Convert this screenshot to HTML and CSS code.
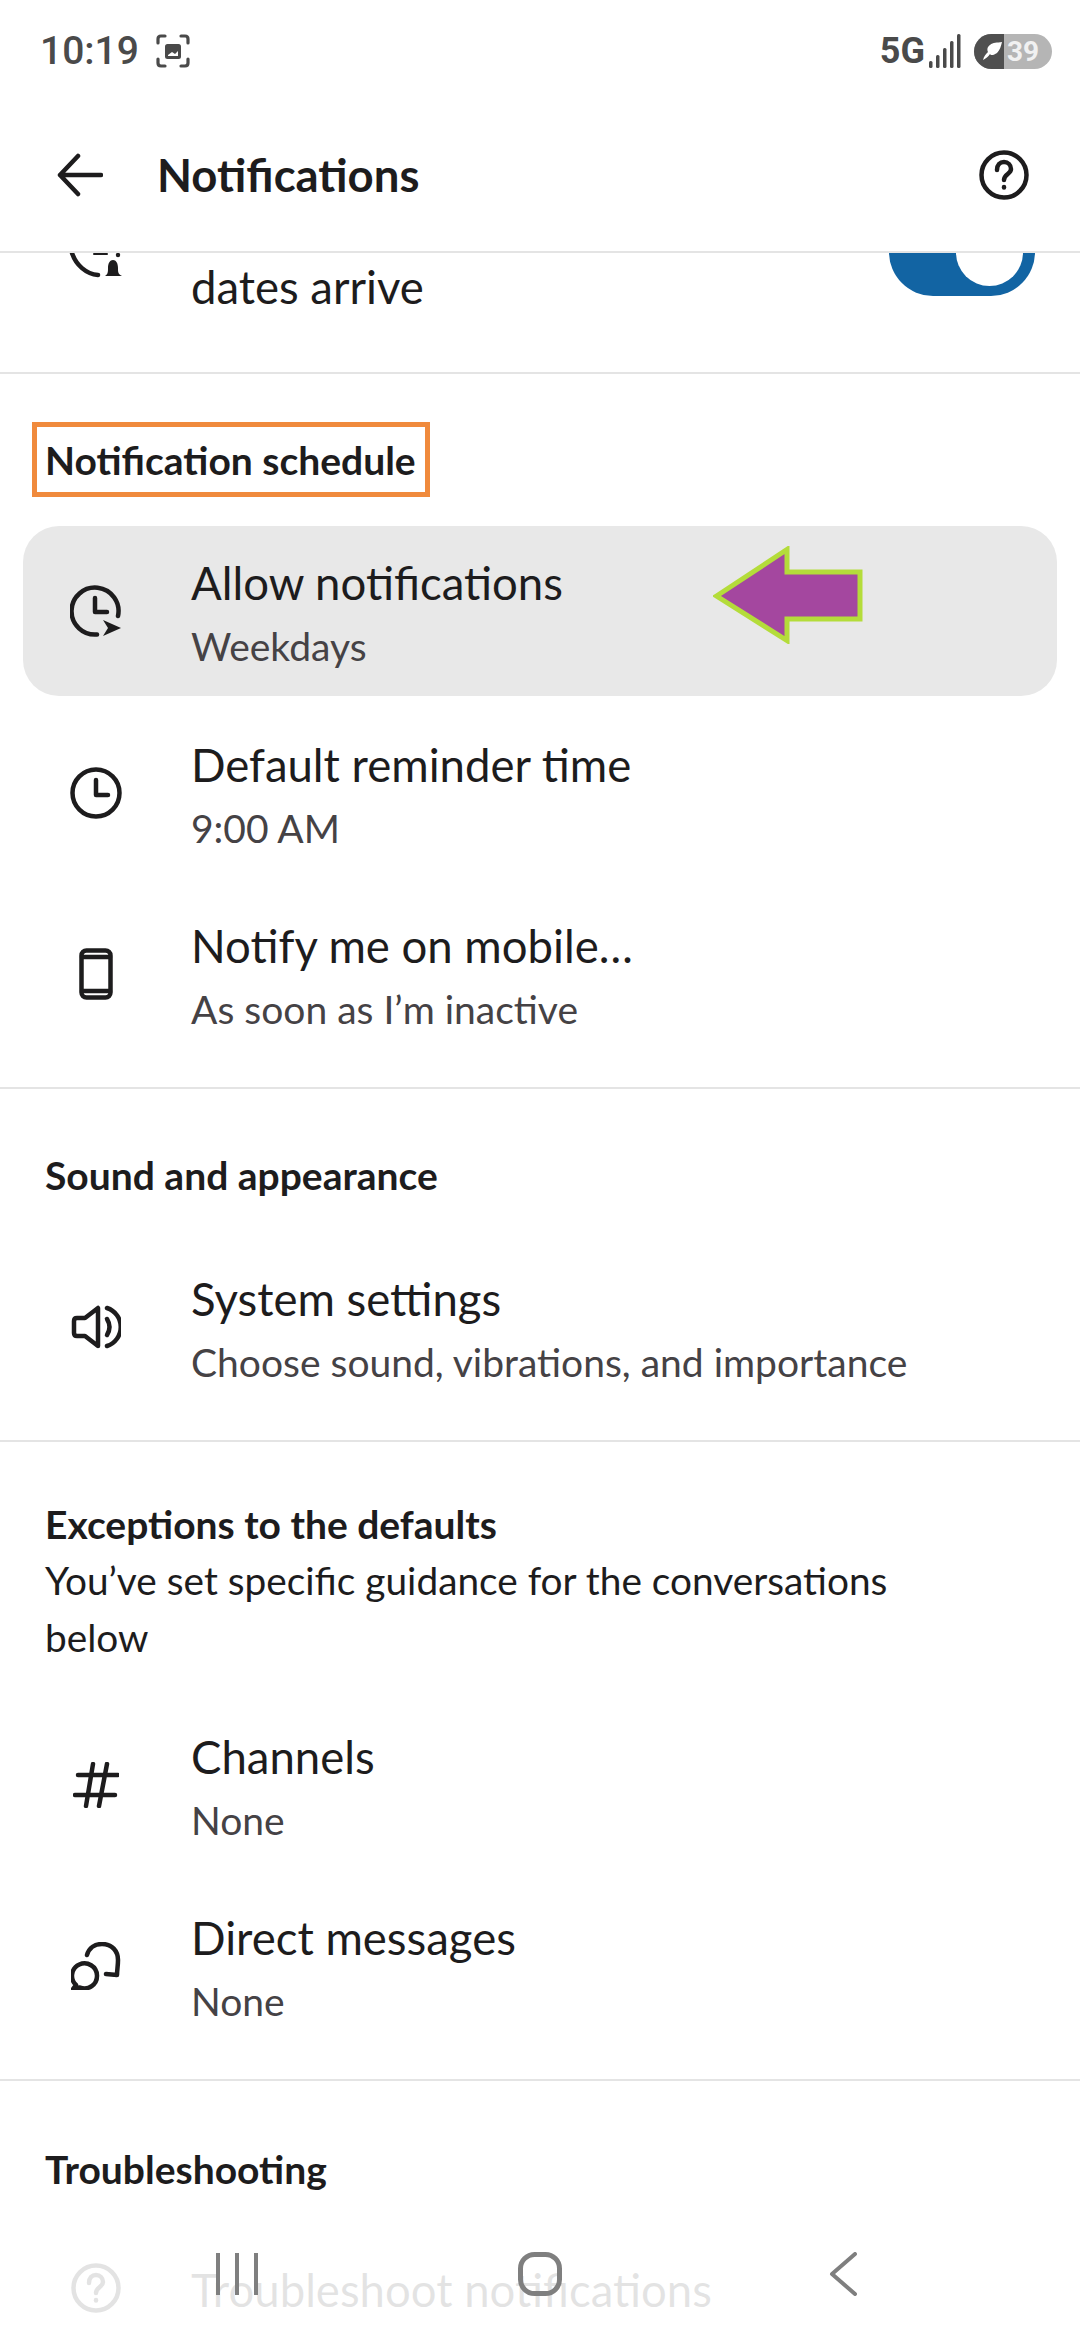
FILE: index.html
```html
<!DOCTYPE html>
<html lang="en">
<head>
    <meta charset="UTF-8">
    <meta name="viewport" content="width=device-width, initial-scale=1.0">
    <title>Notifications</title>
    <link rel="stylesheet" href="styles.css">
</head>
<body>
    <div class="phone">
        <div class="status-bar">
            <div class="status-left">
                <span class="clock">10:19</span>
                <svg class="shot-icon" width="34" height="34" viewBox="0 0 34 34" fill="none" stroke="#4a4a4a" stroke-width="3.2" stroke-linecap="round">
                    <path d="M2 9V5q0-3 3-3h4M25 2h4q3 0 3 3v4M32 25v4q0 3-3 3h-4M9 32H5q-3 0-3-3v-4"/>
                    <rect x="9" y="10" width="16" height="15" rx="2.5" fill="#4a4a4a" stroke="none"/>
                    <path d="M12 21l4-3 3 2 3-3v5H12z" fill="#fff" stroke="none"/>
                </svg>
            </div>
            <div class="status-right">
                <span class="net">5G</span>
                <svg class="signal" width="32" height="34" viewBox="0 0 32 34" fill="#4a4a4a">
                    <rect x="0" y="27" width="3.5" height="7" rx="1.5"/>
                    <rect x="7" y="21" width="3.5" height="13" rx="1.5"/>
                    <rect x="14" y="14" width="3.5" height="20" rx="1.5"/>
                    <rect x="21" y="7" width="3.5" height="27" rx="1.5"/>
                    <rect x="28" y="0" width="3.5" height="34" rx="1.5"/>
                </svg>
                <div class="battery">
                    <span class="battery-leaf">
                        <svg width="22" height="20" viewBox="0 0 22 20" fill="#fff"><path d="M1 19c3-2 5-3 7-6 1 2 4 1 7-1 3-3 4-7 5-11-5 1-9 0-12 3-3 2-3 5-2 7-2 2-4 4-5 8z"/></svg>
                    </span>
                    <span class="battery-level">39</span>
                </div>
            </div>
        </div>

        <header class="top-bar">
            <svg class="back-icon" width="46" height="44" viewBox="0 0 46 44" fill="none" stroke="#1d1c1d" stroke-width="4.5" stroke-linecap="round" stroke-linejoin="round">
                <path d="M3 22h41M21 3L3 22l18 19"/>
            </svg>
            <h1>Notifications</h1>
            <svg class="help-icon" width="50" height="50" viewBox="0 0 50 50" fill="none" stroke="#1d1c1d" stroke-width="4.5" stroke-linecap="round">
                <circle cx="25" cy="25" r="22.5"/>
                <path d="M18 20c0-5 3-8 7-8s7 3 7 7c0 5-7 5-7 11"/>
                <path d="M25 37v.5"/>
            </svg>
        </header>

        <main class="content">
            <section class="section clipped-row">
                <svg class="clipped-icon" width="56" height="30" viewBox="0 0 56 30" fill="none" stroke="#1d1c1d" stroke-width="4.5" stroke-linecap="round">
                    <path d="M4 0c4 12 14 21 26 22"/>
                    <path d="M26 1h13" stroke-width="2"/>
                    <circle cx="50" cy="2" r="2.2" fill="#1d1c1d" stroke="none"/>
                    <path d="M37 23c3-2 3-4 3-8 0-5 2-8 5-8s5 3 5 8c0 4 0 6 4 8z" fill="#1d1c1d" stroke="none"/>
                </svg>
                <p class="row-title">dates arrive</p>
                <div class="toggle"><span class="knob"></span></div>
            </section>

            <section class="section">
                <div class="section-head"><h2 class="marked">Notification schedule</h2></div>
                <div class="row row-active">
                    <svg class="row-icon" width="52" height="52" viewBox="0 0 52 52" fill="none" stroke="#1d1c1d" stroke-width="4.5" stroke-linecap="round" stroke-linejoin="round">
                        <path d="M27 49.5A23.5 23.5 0 1 1 48 31"/>
                        <path d="M25 13v14h12"/>
                        <path d="M33 35l18 8-18 8 5-8z" fill="#1d1c1d" stroke="none"/>
                    </svg>
                    <div class="row-text">
                        <p class="row-title">Allow notifications</p>
                        <p class="row-sub">Weekdays</p>
                    </div>
                    <svg class="callout" width="150" height="98" viewBox="0 0 150 98">
                        <path d="M3.500 50L74 3.500V26h73v47H74v21.500z" fill="#a4479f" stroke="#b4dc3a" stroke-width="5"/>
                    </svg>
                </div>
                <div class="row">
                    <svg class="row-icon" width="52" height="52" viewBox="0 0 52 52" fill="none" stroke="#1d1c1d" stroke-width="4.5" stroke-linecap="round" stroke-linejoin="round">
                        <circle cx="26" cy="26" r="23.5"/>
                        <path d="M26 13v15h12"/>
                    </svg>
                    <div class="row-text">
                        <p class="row-title">Default reminder time</p>
                        <p class="row-sub">9:00 AM</p>
                    </div>
                </div>
                <div class="row">
                    <svg class="row-icon" width="34" height="52" viewBox="0 0 34 52" fill="none" stroke="#1d1c1d" stroke-width="4.5" stroke-linecap="round">
                        <rect x="2.5" y="2.5" width="29" height="47" rx="5"/>
                        <path d="M3 9h28M3 43h28"/>
                    </svg>
                    <div class="row-text">
                        <p class="row-title">Notify me on mobile…</p>
                        <p class="row-sub">As soon as I’m inactive</p>
                    </div>
                </div>
            </section>

            <section class="section">
                <div class="section-head"><h2>Sound and appearance</h2></div>
                <div class="row">
                    <svg class="row-icon" width="50" height="44" viewBox="0 0 50 44" fill="none" stroke="#1d1c1d" stroke-width="4.5" stroke-linecap="round" stroke-linejoin="round">
                        <path d="M27 3v38L14 31H6q-3 0-3-3V16q0-3 3-3h8z"/>
                        <path d="M36 14q5 8 0 16"/>
                        <path d="M36 3A20 20 0 0 1 36 41"/>
                    </svg>
                    <div class="row-text">
                        <p class="row-title">System settings</p>
                        <p class="row-sub">Choose sound, vibrations, and importance</p>
                    </div>
                </div>
            </section>

            <section class="section">
                <div class="section-head section-head-text">
                    <h2>Exceptions to the defaults</h2>
                    <p class="section-note">You’ve set specific guidance for the conversations below</p>
                </div>
                <div class="row">
                    <svg class="row-icon" width="46" height="46" viewBox="0 0 46 46" fill="none" stroke="#1d1c1d" stroke-width="4.5" stroke-linecap="round">
                        <path d="M5 13h40M2 33h40M20 2l-7 42M34 2l-8 42"/>
                    </svg>
                    <div class="row-text">
                        <p class="row-title">Channels</p>
                        <p class="row-sub">None</p>
                    </div>
                </div>
                <div class="row">
                    <svg class="row-icon" width="50" height="48" viewBox="0 0 50 48" fill="none" stroke="#1d1c1d" stroke-width="4.5" stroke-linecap="round" stroke-linejoin="round">
                        <path d="M5 43A12.5 12.5 0 1 1 9 45.500L2 47z"/>
                        <path d="M16 13C18 6 24 2 31 2c10 0 16 7 16 16 0 6-1 10-1 15l-11-1"/>
                    </svg>
                    <div class="row-text">
                        <p class="row-title">Direct messages</p>
                        <p class="row-sub">None</p>
                    </div>
                </div>
            </section>

            <section class="section section-last">
                <div class="section-head"><h2>Troubleshooting</h2></div>
                <div class="row row-single">
                    <svg class="row-icon" width="50" height="50" viewBox="0 0 50 50" fill="none" stroke="#1d1c1d" stroke-width="4.5" stroke-linecap="round">
                        <circle cx="25" cy="25" r="22.5"/>
                        <path d="M18 20c0-5 3-8 7-8s7 3 7 7c0 5-7 5-7 11"/>
                        <path d="M25 37v.5"/>
                    </svg>
                    <div class="row-text">
                        <p class="row-title">Troubleshoot notifications</p>
                    </div>
                </div>
            </section>
        </main>

        <div class="nav-bar">
            <svg width="42" height="44" viewBox="0 0 42 44" fill="none" stroke="#7f7f7f" stroke-width="4">
                <path d="M2 1v42M21 1v42M40 1v42"/>
            </svg>
            <svg width="44" height="44" viewBox="0 0 44 44" fill="none" stroke="#7f7f7f" stroke-width="5">
                <rect x="2.500" y="2.500" width="39" height="39" rx="14"/>
            </svg>
            <svg width="28" height="44" viewBox="0 0 28 44" fill="none" stroke="#7f7f7f" stroke-width="4" stroke-linecap="round" stroke-linejoin="round">
                <path d="M26 2L3 22l23 20"/>
            </svg>
        </div>
    </div>
</body>
</html>
```
FILE: styles.css
```css
* {
    box-sizing: border-box;
}
body {
    margin: 0;
    padding: 0;
    background-color: #fff;
    font-family: 'Lato', sans-serif;
    color: #1d1c1d;
}
p, h1, h2 {
    margin: 0;
}
.phone {
    position: relative;
    width: 1080px;
    height: 2340px;
    overflow: hidden;
    background-color: #fff;
    display: flex;
    flex-direction: column;
}

/* status bar */
.status-bar {
    height: 100px;
    flex: none;
    display: flex;
    align-items: center;
    justify-content: space-between;
    padding: 2px 28px 0 40px;
    color: #4a4a4a;
    font-family: 'Roboto', sans-serif;
}
.status-left, .status-right {
    display: flex;
    align-items: center;
}
.clock {
    font-size: 39px;
    font-weight: 500;
}
.shot-icon {
    margin-left: 17px;
}
.net {
    font-size: 36px;
    font-weight: 700;
}
.signal {
    margin-left: 4px;
}
.battery {
    display: flex;
    margin-left: 13px;
    height: 35px;
    width: 78px;
    border-radius: 17.5px;
    overflow: hidden;
    background-color: #b5b5b5;
}
.battery-leaf {
    width: 30px;
    background-color: #4f4f4f;
    display: flex;
    align-items: center;
    justify-content: flex-end;
}
.battery-level {
    color: #f1f1f1;
    font-size: 28px;
    font-weight: 700;
    line-height: 35px;
    padding-left: 3px;
}

/* top bar */
.top-bar {
    height: 153px;
    flex: none;
    display: flex;
    align-items: center;
    padding: 0 51px 2px 57px;
    border-bottom: 2px solid #e4e4e4;
}
.top-bar h1 {
    flex: 1;
    margin-left: 54px;
    font-size: 45.5px;
    font-weight: 700;
}

/* scrolled content */
.content {
    flex: 1;
    overflow: hidden;
}
.section {
    padding-bottom: 23px;
    border-bottom: 2px solid #e4e4e4;
}
.section-last {
    padding-bottom: 0;
    border-bottom: none;
}
.clipped-row {
    position: relative;
    height: 121px;
    padding: 6px 0 0 191px;
    overflow: hidden;
}
.clipped-icon {
    position: absolute;
    left: 68px;
    top: 0;
}
.toggle {
    position: absolute;
    left: 889px;
    top: -45px;
    width: 146px;
    height: 88px;
    border-radius: 44px;
    background-color: #1264a3;
}
.knob {
    position: absolute;
    right: 12px;
    top: 11px;
    width: 67px;
    height: 67px;
    border-radius: 50%;
    background-color: #fff;
}
.section-head {
    padding: 58px 45px 0;
    height: 147px;
}
.section-last .section-head {
    padding-top: 60px;
}
.section-head h2 {
    font-size: 39px;
    font-weight: 700;
    line-height: 56px;
}
.marked {
    position: relative;
    display: inline-block;
}
.marked::after {
    content: "";
    position: absolute;
    left: -13px;
    right: -14px;
    top: -10px;
    bottom: -9px;
    border: 5px solid #f08a3c;
}
.section-head-text {
    height: 252px;
    padding-top: 54px;
}
.section-note {
    font-size: 38.8px;
    line-height: 57px;
    width: 900px;
}

.row {
    position: relative;
    height: 181px;
    display: flex;
    align-items: center;
    margin: 0 23px;
}
.row-active {
    height: 170px;
    margin-top: 5px;
    margin-bottom: 6px;
    border-radius: 36px;
    background-color: #e8e8e8;
}
.row-single {
    height: 120px;
}
/* icons sit on one centre line whatever their width */
.row-icon {
    position: absolute;
    left: 73px;
    top: 50%;
    transform: translate(-50%, -50%);
}
.row-text {
    margin-left: 168px;
    padding-top: 4px;
}
.row-title {
    font-size: 45.5px;
    line-height: 56px;
}
.row-sub {
    margin-top: 10px;
    font-size: 39px;
    line-height: 50px;
    color: #454245;
}
.callout {
    position: absolute;
    left: 690px;
    top: 20px;
}

/* system nav overlays the list */
.nav-bar {
    position: absolute;
    left: 0;
    right: 0;
    bottom: 0;
    height: 120px;
    padding-top: 32px;
    display: grid;
    grid-template-columns: repeat(3, 303px);
    justify-content: center;
    justify-items: center;
    align-items: start;
    background-color: rgba(255, 255, 255, 0.88);
}
```
